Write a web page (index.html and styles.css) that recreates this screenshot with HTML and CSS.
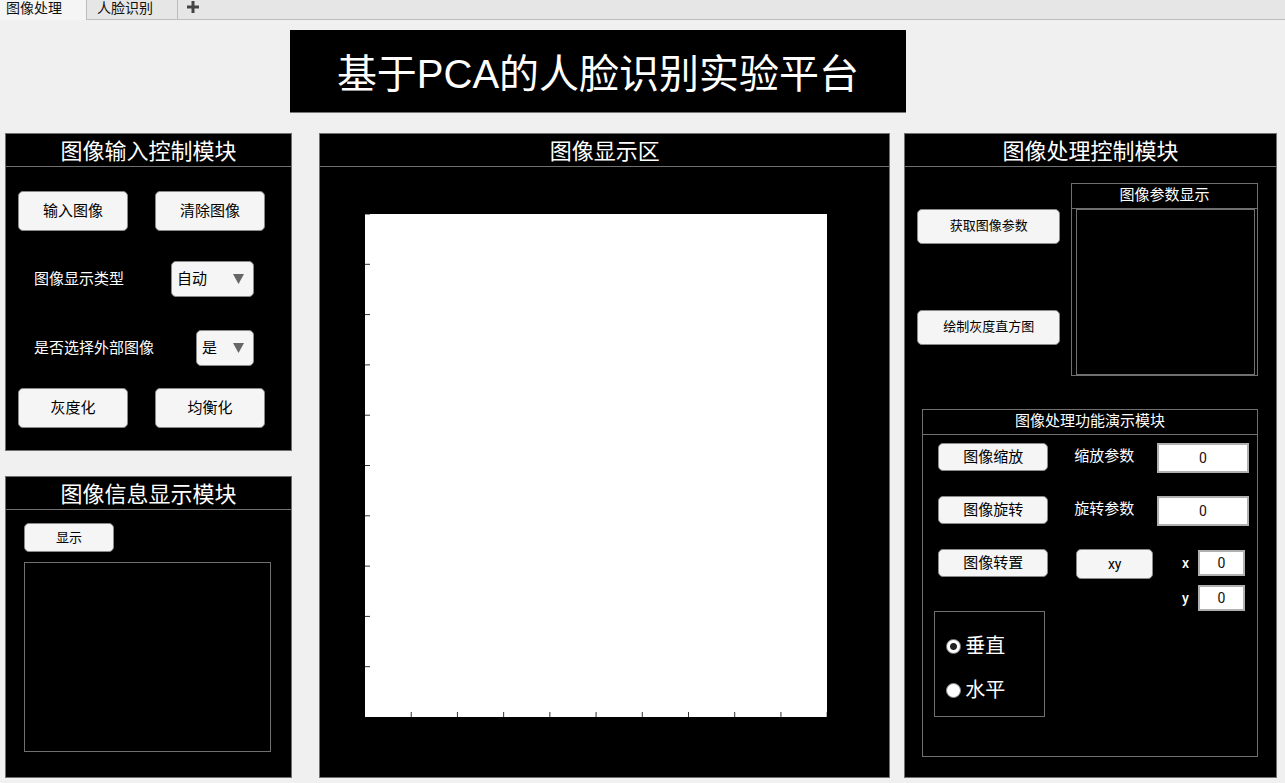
FILE: index.html
```html
<!DOCTYPE html>
<html lang="zh-CN">
<head>
<meta charset="utf-8">
<title>基于PCA的人脸识别实验平台</title>
<link rel="stylesheet" href="styles.css">
</head>
<body>
<nav class="tabs">
  <button class="tab tab-active" type="button">图像处理</button>
  <button class="tab" type="button">人脸识别</button>
  <button class="tab-add" type="button" aria-label="新建标签页">
    <svg width="12" height="12" viewBox="0 0 12 12"><path d="M6 0v12M0 6h12" stroke="#444" stroke-width="3" fill="none"/></svg>
  </button>
</nav>

<h1 class="banner">基于PCA的人脸识别实验平台</h1>

<main class="layout">
  <div class="column">
    <section class="panel panel-input">
      <h2 class="panel-title">图像输入控制模块</h2>
      <div class="input-body">
        <div class="button-row">
          <button class="btn btn-tall" type="button">输入图像</button>
          <button class="btn btn-tall" type="button">清除图像</button>
        </div>
        <div class="field-row">
          <label for="display-type">图像显示类型</label>
          <span class="drop drop-wide">
            <select id="display-type"><option>自动</option></select>
            <svg class="drop-arrow" width="11" height="10" viewBox="0 0 11 10"><path d="M0 0h11L5.500 10z" fill="#666"/></svg>
          </span>
        </div>
        <div class="field-row">
          <label for="external">是否选择外部图像</label>
          <span class="drop drop-narrow">
            <select id="external"><option>是</option></select>
            <svg class="drop-arrow" width="11" height="10" viewBox="0 0 11 10"><path d="M0 0h11L5.500 10z" fill="#666"/></svg>
          </span>
        </div>
        <div class="button-row">
          <button class="btn btn-tall" type="button">灰度化</button>
          <button class="btn btn-tall" type="button">均衡化</button>
        </div>
      </div>
    </section>

    <section class="panel panel-info">
      <h2 class="panel-title">图像信息显示模块</h2>
      <div class="info-body">
        <button class="btn btn-show" type="button">显示</button>
        <textarea class="output" aria-label="图像信息"></textarea>
      </div>
    </section>
  </div>

  <section class="panel panel-view">
    <h2 class="panel-title">图像显示区</h2>
    <svg class="axes" stroke="#333">
      <line x1="0" y1="10%" x2="5" y2="10%"/><line x1="0" y1="20%" x2="5" y2="20%"/>
      <line x1="0" y1="30%" x2="5" y2="30%"/><line x1="0" y1="40%" x2="5" y2="40%"/>
      <line x1="0" y1="50%" x2="5" y2="50%"/><line x1="0" y1="60%" x2="5" y2="60%"/>
      <line x1="0" y1="70%" x2="5" y2="70%"/><line x1="0" y1="80%" x2="5" y2="80%"/>
      <line x1="0" y1="90%" x2="5" y2="90%"/><line x1="0" y1="0" x2="5" y2="0"/>
      <svg y="100%" overflow="visible">
        <line x1="10%" y1="-5" x2="10%" y2="0"/><line x1="20%" y1="-5" x2="20%" y2="0"/>
        <line x1="30%" y1="-5" x2="30%" y2="0"/><line x1="40%" y1="-5" x2="40%" y2="0"/>
        <line x1="50%" y1="-5" x2="50%" y2="0"/><line x1="60%" y1="-5" x2="60%" y2="0"/>
        <line x1="70%" y1="-5" x2="70%" y2="0"/><line x1="80%" y1="-5" x2="80%" y2="0"/>
        <line x1="90%" y1="-5" x2="90%" y2="0"/><line x1="100%" y1="-5" x2="100%" y2="0"/>
      </svg>
    </svg>
  </section>

  <section class="panel panel-process">
    <h2 class="panel-title">图像处理控制模块</h2>
    <div class="process-body">
      <div class="params">
        <div class="param-actions">
          <button class="btn btn-param" type="button">获取图像参数</button>
          <button class="btn btn-param" type="button">绘制灰度直方图</button>
        </div>
        <section class="subpanel param-view">
          <h3 class="subpanel-title">图像参数显示</h3>
          <textarea class="output param-output" aria-label="图像参数"></textarea>
        </section>
      </div>

      <section class="subpanel demo">
        <h3 class="subpanel-title">图像处理功能演示模块</h3>
        <div class="demo-body">
          <div class="demo-row">
            <button class="btn btn-demo" type="button">图像缩放</button>
            <label for="scale">缩放参数</label>
            <input class="num num-wide" id="scale" type="text" value="0">
          </div>
          <div class="demo-row">
            <button class="btn btn-demo" type="button">图像旋转</button>
            <label for="rotate">旋转参数</label>
            <input class="num num-wide" id="rotate" type="text" value="0">
          </div>
          <div class="demo-row">
            <button class="btn btn-demo" type="button">图像转置</button>
            <button class="btn btn-xy" type="button">xy</button>
            <div class="axis-fields">
              <label for="x">x</label><input class="num" id="x" type="text" value="0">
              <label for="y">y</label><input class="num" id="y" type="text" value="0">
            </div>
          </div>
          <div class="radio-box" role="radiogroup" aria-label="转置方向">
            <label class="radio"><input type="radio" name="direction" checked>垂直</label>
            <label class="radio"><input type="radio" name="direction">水平</label>
          </div>
        </div>
      </section>
    </div>
  </section>
</main>
</body>
</html>
```

FILE: styles.css
```css
* {
  box-sizing: border-box;
}

body {
  margin: 0;
  min-height: 100vh;
  display: flex;
  flex-direction: column;
  background: #f0f0f0;
  color: #fff;
  font-family: "Liberation Sans", "Noto Sans CJK SC", sans-serif;
  font-size: 15px;
  line-height: 20px;
}

button,
input,
select,
textarea {
  margin: 0;
  padding: 0;
  font: inherit;
}

h1,
h2,
h3 {
  margin: 0;
  font-weight: 400;
  text-align: center;
}

.tabs {
  display: flex;
  height: 20px;
  background: #e6e6e6;
  border-bottom: 1px solid #bdbdbd;
}

.tab {
  height: 19px;
  padding: 0 20px 4px 10px;
  width: 91px;
  border: 0;
  border-right: 1px solid #bdbdbd;
  background: #e6e6e6;
  color: #111;
  font-size: 14px;
  line-height: 16px;
  text-align: left;
  white-space: nowrap;
}

.tab-active {
  width: 87px;
  height: 20px;
  padding-left: 6px;
  background: #f5f5f5;
}

.tab-add {
  width: 30px;
  height: 14px;
  border: 0;
  background: none;
  display: grid;
  place-items: center;
}

.banner {
  margin: 10px 379px 20px 290px;
  padding: 14px 0 8px;
  background: #000;
  border-bottom: 1px solid #777;
  font-size: 40px;
  line-height: 60px;
  white-space: nowrap;
}

.layout {
  flex: 1;
  display: flex;
  padding: 0 8px 5px 5px;
}

.column {
  flex: 288 1 0;
  display: flex;
  flex-direction: column;
  gap: 25px;
  margin-right: 27px;
}

.panel {
  display: flex;
  flex-direction: column;
  background: #000;
  border: 1px solid #707070;
}

.panel-title {
  padding-top: 4px;
  border-bottom: 1px solid #707070;
  font-size: 22px;
  line-height: 28px;
}

.panel-info {
  flex: 1;
}

.panel-view {
  flex: 571 1 0;
  margin-right: 14px;
}

.panel-process {
  flex: 372 1 0;
}

.btn {
  background: #f5f5f5;
  border: 1px solid #8a8a8a;
  border-radius: 5px;
  color: #000;
  white-space: nowrap;
}

.input-body {
  padding: 24px 26px 22px 12px;
}

.button-row {
  display: flex;
  justify-content: space-between;
}

.btn-tall {
  width: 110px;
  height: 40px;
}

.field-row {
  display: flex;
  align-items: center;
  justify-content: space-between;
  margin: 30px 11px 0 16px;
}

.field-row + .field-row {
  margin-top: 33px;
}

.field-row + .button-row {
  margin-top: 22px;
}

.drop {
  display: grid;
  align-items: center;
  height: 36px;
}

.drop-wide {
  width: 83px;
}

.drop-narrow {
  width: 58px;
}

.drop select {
  grid-area: 1 / 1;
  width: 100%;
  height: 36px;
  padding-left: 5px;
  appearance: none;
  background: #f5f5f5;
  border: 1px solid #8a8a8a;
  border-radius: 5px;
  color: #000;
}

.drop-arrow {
  grid-area: 1 / 1;
  justify-self: end;
  margin-right: 10px;
  pointer-events: none;
}

.info-body {
  flex: 1;
  display: flex;
  flex-direction: column;
  align-items: flex-start;
  padding: 13px 20px 25px 18px;
}

.btn-show {
  width: 90px;
  height: 29px;
  font-size: 13px;
}

.output {
  display: block;
  flex: 1;
  width: 100%;
  background: #000;
  border: 1px solid #707070;
  color: #fff;
  resize: none;
}

.info-body .output {
  margin-top: 10px;
}

.axes {
  flex: 1;
  width: auto;
  min-height: 0;
  margin: 47px 62px 60px 45px;
  background: #fff;
}

.process-body {
  flex: 1;
  display: flex;
  flex-direction: column;
  padding: 16px 18px 20px 12px;
}

.params {
  display: flex;
  justify-content: space-between;
}

.param-actions {
  display: flex;
  flex-direction: column;
  gap: 66px;
  padding-top: 26px;
}

.btn-param {
  width: 143px;
  height: 35px;
  padding-bottom: 2px;
  font-size: 13px;
}

.subpanel {
  display: flex;
  flex-direction: column;
  border: 1px solid #707070;
}

.subpanel-title {
  padding-bottom: 2px;
  border-bottom: 1px solid #707070;
  font-size: 15px;
  line-height: 22px;
}

.param-view {
  width: 187px;
  height: 193px;
}

.param-output {
  width: auto;
  margin: 0 2px 0 4px;
}

.demo {
  flex: 1;
  margin: 33px 0 0 5px;
}

.demo-body {
  padding: 8px 8px 0 11px;
}

.demo-row {
  display: flex;
  align-items: flex-start;
  margin-bottom: 23px;
  padding-left: 4px;
}

.demo-row > label {
  margin-left: 26px;
  line-height: 26px;
}

.btn-demo {
  width: 110px;
  height: 28px;
}

.num {
  width: 47px;
  height: 26px;
  background: #fff;
  border: 2px solid #b0b0b0;
  color: #111;
  font-family: Roboto, sans-serif;
  font-size: 14px;
  font-weight: 400;
  text-align: center;
}

.num-wide {
  width: 92px;
  height: 30px;
  margin-left: auto;
}

.btn-xy {
  width: 77px;
  height: 30px;
  margin-left: 28px;
  font-family: Roboto, sans-serif;
  font-size: 14px;
}

.axis-fields {
  display: grid;
  grid-template-columns: 16px 47px;
  gap: 9px 0;
  align-items: center;
  margin: 1px 4px 0 auto;
  font-family: Roboto, sans-serif;
  font-size: 14px;
  font-weight: 500;
}

.demo-row:nth-child(3) {
  margin-bottom: 0;
}

.radio-box {
  display: flex;
  flex-direction: column;
  gap: 16px;
  width: 111px;
  padding: 20px 0 12px 11px;
  border: 1px solid #707070;
}

.radio {
  display: flex;
  align-items: center;
  gap: 4px;
  font-size: 20px;
  line-height: 28px;
}

.radio input {
  appearance: none;
  width: 15px;
  height: 15px;
  border: 1px solid #888;
  border-radius: 50%;
  background: #fff;
}

.radio input:checked {
  background: radial-gradient(circle, #222 3px, #fff 4px);
}
```
